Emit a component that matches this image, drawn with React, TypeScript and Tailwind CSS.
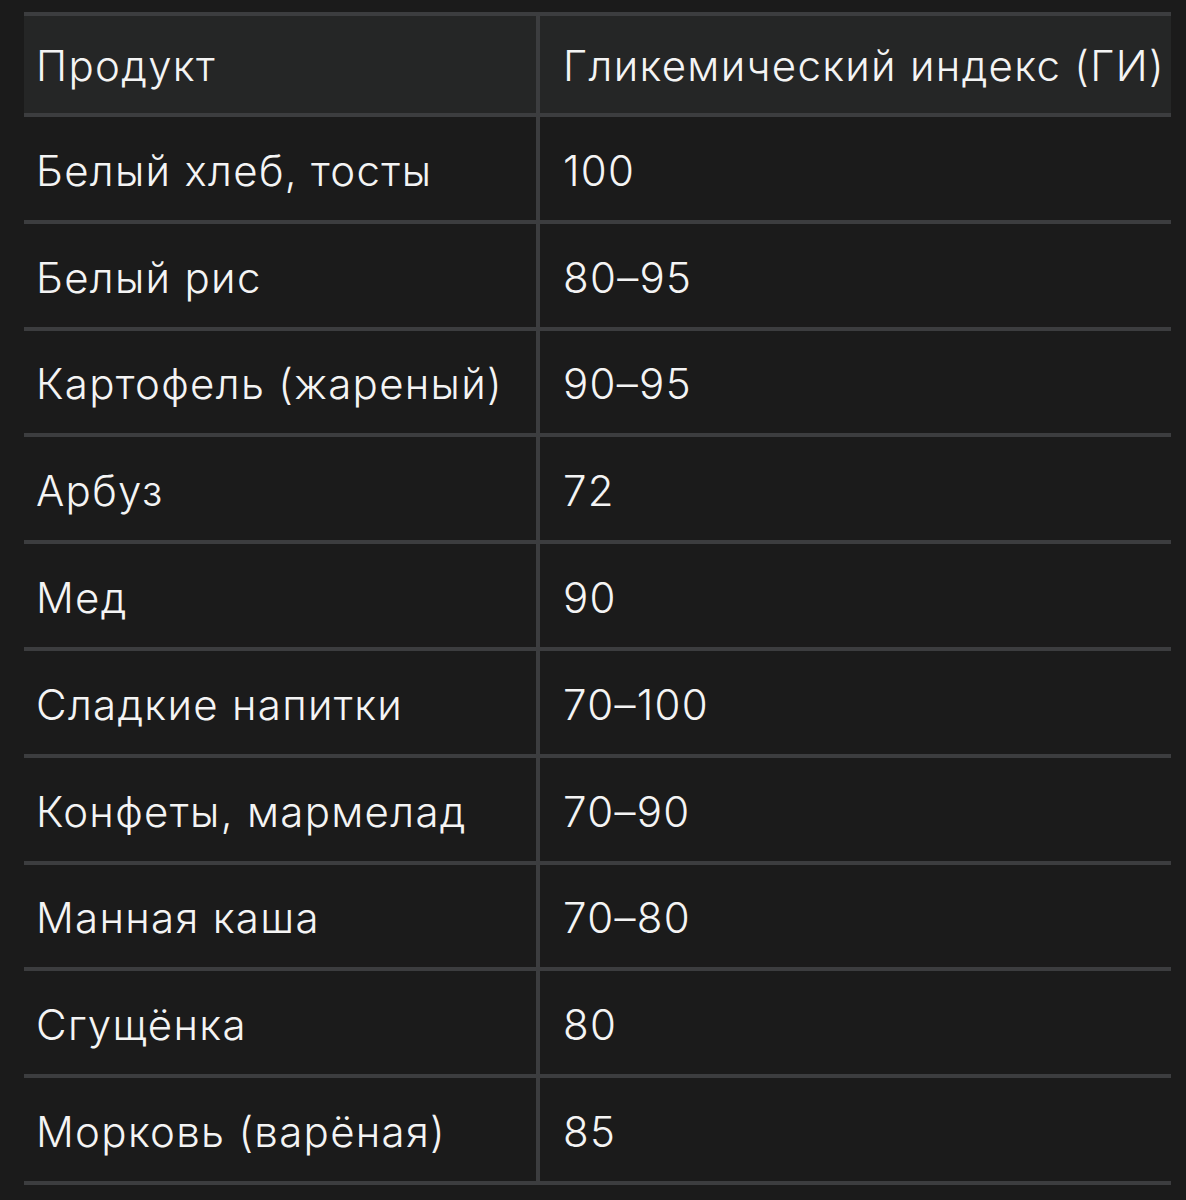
const rows: [string, string][] = [
  ['Белый хлеб, тосты', '100'],
  ['Белый рис', '80–95'],
  ['Картофель (жареный)', '90–95'],
  ['Арбуз', '72'],
  ['Мед', '90'],
  ['Сладкие напитки', '70–100'],
  ['Конфеты, мармелад', '70–90'],
  ['Манная каша', '70–80'],
  ['Сгущёнка', '80'],
  ['Морковь (варёная)', '85'],
];

export default function App() {
  return (
    <div
      className="min-h-[1200px] bg-[#1b1b1b] pt-[12px] pl-[24px] text-[#f4f4f4] text-[42px] tracking-[1.3px] font-light"
      style={{ fontFamily: 'Inter, "Liberation Sans", sans-serif' }}
    >
      <div className="w-[1147px] border-t-4 border-[#3c3d3f]">
        {/* шапка */}
        <div className="grid grid-cols-[516px_1fr] h-[101px] bg-[#252626] border-b-4 border-[#3c3d3f]">
          <div className="flex items-center pl-[12px] pt-[2px] border-r-4 border-[#3c3d3f]">
            Продукт
          </div>
          <div className="flex items-center pl-[23px] pt-[2px] whitespace-nowrap">
            Гликемический индекс (ГИ)
          </div>
        </div>

        {rows.map(([name, gi]) => (
          <div
            key={name}
            className="grid grid-cols-[516px_1fr] h-[106.8px] border-b-4 border-[#3c3d3f]"
          >
            <div className="flex items-center pl-[12px] pt-[4px] border-r-4 border-[#3c3d3f] whitespace-nowrap">
              {name}
            </div>
            <div className="flex items-center pl-[23px] pt-[4px]">{gi}</div>
          </div>
        ))}
      </div>
    </div>
  );
}
